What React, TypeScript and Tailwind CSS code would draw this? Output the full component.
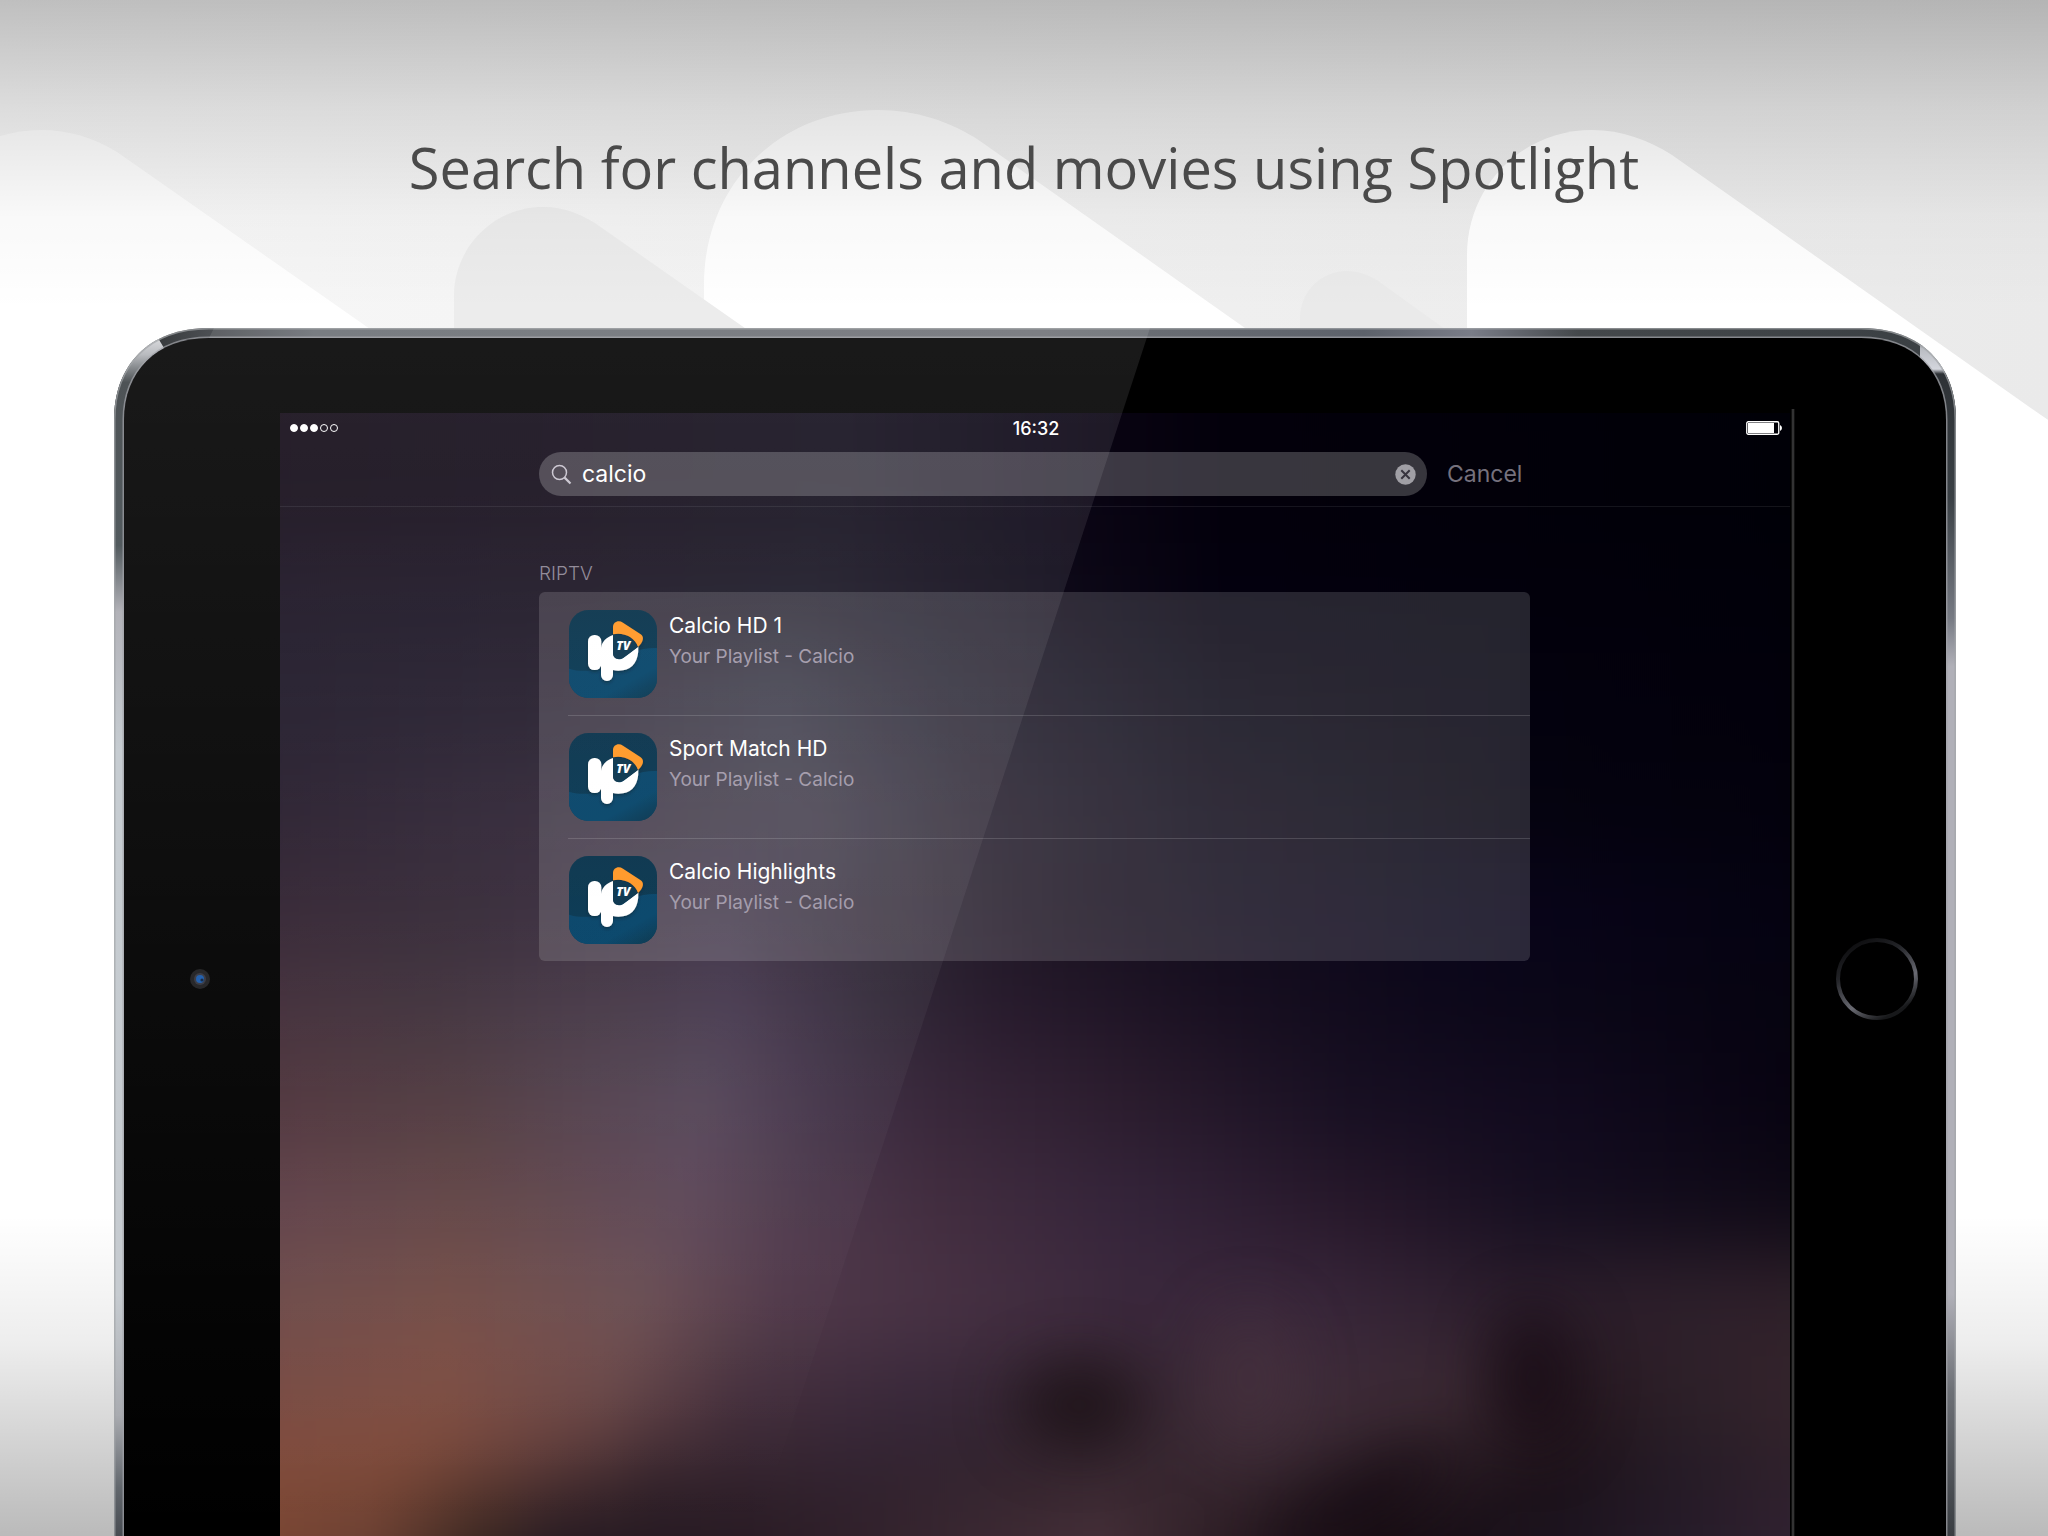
import { useState } from "react";
import { clsx } from "clsx";

type Result = {
    title: string;
    subtitle: string;
};

const RESULTS: Result[] = [
    { title: "Calcio HD 1", subtitle: "Your Playlist - Calcio" },
    { title: "Sport Match HD", subtitle: "Your Playlist - Calcio" },
    { title: "Calcio Highlights", subtitle: "Your Playlist - Calcio" },
];

// Horizontal colour bands, blurred into each other vertically
const BANDS: { id: string; y: number; height: number; stops: [number, string][] }[] = [
    { id: "b0", y: -200, height: 330, stops: [[0, "#120916"], [38, "#130f1d"], [50, "#0c0616"], [62, "#03000b"], [100, "#000007"]] },
    { id: "b1", y: 130, height: 110, stops: [[0, "#191222"], [20, "#1b1423"], [36, "#1a1725"], [50, "#0f0a19"], [62, "#03000e"], [100, "#010009"]] },
    { id: "b2", y: 240, height: 110, stops: [[0, "#1d1626"], [20, "#231b2b"], [34, "#2b2a3a"], [44, "#1c1827"], [62, "#090614"], [80, "#03010e"], [100, "#02000b"]] },
    { id: "b3", y: 350, height: 100, stops: [[0, "#241929"], [16, "#2d2233"], [36, "#353040"], [46, "#221b2a"], [60, "#110c1b"], [80, "#05030f"], [100, "#03010c"]] },
    { id: "b4", y: 450, height: 100, stops: [[0, "#30202f"], [15, "#322634"], [30, "#3c3044"], [42, "#2b2331"], [52, "#1b1321"], [62, "#120c1d"], [80, "#08041a"], [100, "#040210"]] },
    { id: "b5", y: 550, height: 90, stops: [[0, "#402a37"], [12, "#3e303a"], [24, "#463847"], [31, "#473950"], [40, "#332a39"], [48, "#281b2d"], [62, "#180f20"], [75, "#0d081a"], [100, "#05030f"]] },
    { id: "b6", y: 640, height: 100, stops: [[0, "#4d313a"], [14, "#4f3a40"], [29, "#554759"], [37, "#423248"], [44, "#38273a"], [56, "#2b1c2d"], [70, "#170f22"], [84, "#10091d"], [100, "#06020f"]] },
    { id: "b7", y: 740, height: 100, stops: [[0, "#60404a"], [14, "#624546"], [28, "#5e4759"], [36, "#4c384b"], [44, "#422d3f"], [56, "#34243a"], [70, "#261729"], [82, "#150e20"], [100, "#0d0814"]] },
    { id: "b8", y: 840, height: 100, stops: [[0, "#6e4c4b"], [13, "#754e48"], [25, "#6c5054"], [34, "#51394a"], [44, "#483244"], [56, "#3b283c"], [68, "#38263a"], [80, "#2c1e2c"], [100, "#30212a"]] },
    { id: "b9", y: 940, height: 90, stops: [[0, "#784a43"], [13, "#7f4e43"], [23, "#6c4848"], [31, "#452f3c"], [42, "#38283a"], [54, "#33242f"], [66, "#402d3a"], [76, "#3c2a33"], [84, "#261820"], [92, "#2e2129"], [100, "#37252c"]] },
    { id: "b10", y: 1030, height: 60, stops: [[0, "#854e3b"], [10, "#814b38"], [18, "#5f3b36"], [26, "#35242c"], [38, "#30222f"], [50, "#32232c"], [62, "#3a2932"], [72, "#2c1e26"], [82, "#1b1017"], [90, "#221924"], [100, "#30212c"]] },
    { id: "b11", y: 1090, height: 240, stops: [[0, "#7c4632"], [8, "#693f32"], [15, "#35241f"], [20, "#221820"], [32, "#281a23"], [44, "#382630"], [54, "#463039"], [62, "#2b1c23"], [72, "#150b11"], [84, "#1d1521"], [100, "#342434"]] },
];

function Wallpaper() {
    return (
        <svg
            className="absolute inset-0 size-full"
            viewBox="0 0 1512 1123"
            preserveAspectRatio="none"
            aria-hidden="true"
        >
            <defs>
                {BANDS.map(({ id, stops }) => (
                    <linearGradient key={id} id={id}>
                        {stops.map(([offset, color]) => (
                            <stop key={offset} offset={`${offset}%`} stopColor={color} />
                        ))}
                    </linearGradient>
                ))}
                <filter id="bandBlur" x="-10%" y="-10%" width="120%" height="120%" colorInterpolationFilters="sRGB">
                    <feGaussianBlur stdDeviation="12 42" />
                </filter>
                <filter id="blobBlur" x="-100%" y="-100%" width="300%" height="300%" colorInterpolationFilters="sRGB">
                    <feGaussianBlur stdDeviation="30" />
                </filter>
            </defs>
            <g filter="url(#bandBlur)">
                {BANDS.map(({ id, y, height }) => (
                    <rect key={id} x="-40" y={y} width="1592" height={height + 1} fill={`url(#${id})`} />
                ))}
            </g>
            <g filter="url(#blobBlur)">
                <ellipse cx="800" cy="992" rx="62" ry="40" fill="#1b1015" opacity="0.85" />
                <ellipse cx="1255" cy="965" rx="40" ry="70" fill="#160a13" opacity="0.75" />
                <ellipse cx="1080" cy="1090" rx="110" ry="30" fill="#120810" opacity="0.6" transform="rotate(-30 1080 1090)" />
                <ellipse cx="970" cy="965" rx="44" ry="70" fill="#49333f" opacity="0.5" />
            </g>
        </svg>
    );
}

function Backdrop() {
    return (
        <svg
            className="absolute inset-0 size-full"
            viewBox="0 0 2048 1536"
            preserveAspectRatio="none"
            aria-hidden="true"
        >
            <defs>
                <linearGradient id="sky" x1="0" x2="1" y1="0" y2="0">
                    <stop offset="0" stopColor="#f8f8f8" />
                    <stop offset="0.3" stopColor="#f4f4f4" />
                    <stop offset="0.6" stopColor="#efefef" />
                    <stop offset="1" stopColor="#eaeaea" />
                </linearGradient>
                <linearGradient id="topShade" x1="0" x2="0" y1="0" y2="1">
                    <stop offset="0" stopColor="#000" stopOpacity="0.23" />
                    <stop offset="0.35" stopColor="#000" stopOpacity="0.11" />
                    <stop offset="0.7" stopColor="#000" stopOpacity="0.025" />
                    <stop offset="1" stopColor="#000" stopOpacity="0" />
                </linearGradient>
                <linearGradient id="bottomShade" x1="0" x2="0" y1="0" y2="1">
                    <stop offset="0" stopColor="#000" stopOpacity="0" />
                    <stop offset="0.4" stopColor="#000" stopOpacity="0.07" />
                    <stop offset="1" stopColor="#000" stopOpacity="0.27" />
                </linearGradient>
            </defs>
            <rect width="2048" height="1536" fill="#fff" />
            <path d="M0 0H2048V420L1900 328H0Z" fill="url(#sky)" />
            <path d="M0 136C40 124 82 130 117 152L380 336V420H0Z" fill="#fff" />
            <path d="M704 340V284C704 186 778 110 878 110C915 110 950 121 980 141L1262 340Z" fill="#fff" />
            <path d="M1467 340V255C1467 186 1522 130 1592 130C1622 130 1648 140 1672 155L2048 420V500H1467Z" fill="#fff" />
            <path d="M454 340V296C454 247 494 207 543 207C566 207 584 215 602 228L762 340Z" fill="#ececec" />
            <path d="M1300 340V318C1300 292 1321 271 1347 271C1358 271 1369 275 1378 281L1460 340Z" fill="#eaeaea" />
            <rect width="2048" height="310" fill="url(#topShade)" />
            <rect y="1215" width="2048" height="321" fill="url(#bottomShade)" />
        </svg>
    );
}

function DeviceShell() {
    return (
        <svg
            className="absolute inset-0 size-full"
            viewBox="0 0 1842 1208"
            preserveAspectRatio="none"
            aria-hidden="true"
        >
            <defs>
                <linearGradient id="rimTop" gradientUnits="userSpaceOnUse" x1="40" x2="1820" y1="0" y2="0">
                    <stop offset="0" stopColor="#36393b" />
                    <stop offset="0.03" stopColor="#4b4e52" />
                    <stop offset="0.09" stopColor="#6b6f75" />
                    <stop offset="0.5" stopColor="#6f7277" />
                    <stop offset="0.68" stopColor="#5d626b" />
                    <stop offset="0.74" stopColor="#7a7d88" />
                    <stop offset="0.8" stopColor="#44484b" />
                    <stop offset="1" stopColor="#3b4044" />
                </linearGradient>
                <linearGradient id="rimLeft" gradientUnits="userSpaceOnUse" x1="0" x2="0" y1="0" y2="1208">
                    <stop offset="0.01" stopColor="#d6d7da" />
                    <stop offset="0.022" stopColor="#b9bbbf" />
                    <stop offset="0.045" stopColor="#4e5356" />
                    <stop offset="0.18" stopColor="#525a5e" />
                    <stop offset="0.235" stopColor="#b2b2b8" />
                    <stop offset="0.35" stopColor="#c6ccd1" />
                    <stop offset="0.8" stopColor="#c6cbd0" />
                    <stop offset="0.9" stopColor="#a9abb0" />
                    <stop offset="0.96" stopColor="#62676d" />
                    <stop offset="1" stopColor="#484c52" />
                </linearGradient>
                <linearGradient id="rimRight" gradientUnits="userSpaceOnUse" x1="0" x2="0" y1="0" y2="1208">
                    <stop offset="0.008" stopColor="#54585c" />
                    <stop offset="0.017" stopColor="#b9bcc2" />
                    <stop offset="0.034" stopColor="#d4d6dd" />
                    <stop offset="0.038" stopColor="#2e3236" />
                    <stop offset="0.14" stopColor="#3a4045" />
                    <stop offset="0.24" stopColor="#767a83" />
                    <stop offset="0.28" stopColor="#b0b0b8" />
                    <stop offset="0.8" stopColor="#b0b0b8" />
                    <stop offset="0.88" stopColor="#6d7076" />
                    <stop offset="1" stopColor="#393d42" />
                </linearGradient>
                <clipPath id="shell">
                    <path d="M0 1208V92C0 38 34 0 95 0H1747C1808 0 1842 38 1842 92V1208Z" />
                </clipPath>
            </defs>
            <g clipPath="url(#shell)">
                <rect width="1842" height="1208" fill="url(#rimTop)" />
                <path d="M0 0H38L50 20V1208H0Z" fill="url(#rimLeft)" />
                <path d="M1842 0H1806V1208H1842Z" fill="url(#rimRight)" />
                <path
                    d="M0 1208V92C0 38 34 0 95 0H1747C1808 0 1842 38 1842 92V1208"
                    fill="none"
                    stroke="#a4a6aa"
                    strokeOpacity="0.7"
                    strokeWidth="3"
                />
            </g>
            <path
                d="M10 1208V92C10 44 42 10 95 10H1747C1800 10 1832 44 1832 92V1208Z"
                fill="#000"
                stroke="#a3a4aa"
                strokeOpacity="0.7"
                strokeWidth="3"
            />
            <path d="M10 1208V92C10 44 42 10 95 10H1747C1800 10 1832 44 1832 92V1208Z" fill="#000" />
        </svg>
    );
}

function Glare() {
    return (
        <svg
            className="pointer-events-none absolute inset-0 size-full"
            viewBox="0 0 1842 1208"
            preserveAspectRatio="none"
            aria-hidden="true"
        >
            <defs>
                <linearGradient id="glare" x1="0" x2="0" y1="0" y2="1">
                    <stop offset="0" stopColor="#fff" stopOpacity="0.1" />
                    <stop offset="1" stopColor="#fff" stopOpacity="0" />
                </linearGradient>
            </defs>
            <path d="M10 1208V92C10 44 42 10 95 10L100 0H1036L641 1208Z" fill="url(#glare)" />
        </svg>
    );
}

function AppIcon({ id }: { id: string }) {
    return (
        <svg className="size-22 shrink-0" viewBox="0 0 264 264" aria-hidden="true">
            <defs>
                <linearGradient id={`${id}-bg`} x1="0" x2="0" y1="0" y2="1">
                    <stop offset="0" stopColor="#042f48" />
                    <stop offset="1" stopColor="#013450" />
                </linearGradient>
                <linearGradient id={`${id}-wave`} x1="0.2" x2="1" y1="0.2" y2="1">
                    <stop offset="0" stopColor="#024066" />
                    <stop offset="0.6" stopColor="#014167" />
                    <stop offset="1" stopColor="#033048" />
                </linearGradient>
                <clipPath id={`${id}-clip`}>
                    <rect width="264" height="264" rx="58" />
                </clipPath>
                <filter id={`${id}-shadow`} x="-20%" y="-20%" width="140%" height="150%">
                    <feDropShadow dx="0" dy="6" stdDeviation="5" floodColor="#04202f" floodOpacity="0.6" />
                </filter>
            </defs>
            <g clipPath={`url(#${id}-clip)`}>
                <rect width="264" height="264" fill={`url(#${id}-bg)`} />
                <path d="M0 176C40 188 90 184 130 160C175 130 215 112 264 114V264H0Z" fill={`url(#${id}-wave)`} />
            </g>
            <g filter={`url(#${id}-shadow)`}>
                <rect x="57" y="75" width="40" height="105" rx="19" fill="#fff" />
                <path
                    d="M132 75C111 82 99 96 96 113V195A18 18 0 0 0 132 195V180C141 183 152 183 162 181C191 176 210 152 208 110L164 143C152 151 134 150 132 130Z"
                    fill="#fff"
                />
                <path d="M90 118H112V160Q104 170 90 166Z" fill="#fff" />
                <path
                    d="M132 73V52C132 36 148 29 162 38L214 72C226 80 225 94 207 111C198 82 164 66 132 73Z"
                    fill="#ff9621"
                />
            </g>
            <path d="M132 75C164 69 194 82 206 111L166 141C152 151 132 148 132 130Z" fill="#04304a" />
            <text
                x="163"
                y="120"
                textAnchor="middle"
                fill="#fff"
                fontSize="36"
                fontWeight="800"
                fontStyle="italic"
                fontFamily="'Open Sans', sans-serif"
            >
                TV
            </text>
        </svg>
    );
}

function StatusBar() {
    return (
        <div className="flex h-[30px] items-center justify-between pr-2 pl-[10px]">
            <div className="flex flex-1 gap-[2px]">
                {[true, true, true, false, false].map((filled, i) => (
                    <span
                        key={i}
                        className={clsx("size-2 rounded-full border border-white", filled && "bg-white")}
                    />
                ))}
            </div>
            <span className="text-[18px] font-medium">16:32</span>
            <div className="flex flex-1 justify-end">
                <svg className="h-[14px] w-9" viewBox="0 0 36 14" aria-hidden="true">
                    <rect x="0.75" y="0.75" width="32" height="12.5" rx="1.5" fill="none" stroke="#fff" strokeWidth="1.3" />
                    <rect x="2" y="2" width="26" height="10" fill="#fff" />
                    <path d="M34 4Q36 5 36 7T34 10Z" fill="#fff" />
                </svg>
            </div>
        </div>
    );
}

function SearchBar() {
    const [query, setQuery] = useState("calcio");

    return (
        <div className="mt-[9px] grid grid-cols-[259px_1fr_260px] border-b border-white/8 pb-[10px]">
            <div className="col-start-2 flex items-center">
                <div className="flex h-11 flex-1 items-center rounded-full bg-white/21 pr-[11px] pl-3">
                    <svg className="size-[21px] shrink-0" viewBox="0 0 21 21" fill="none" stroke="#c9c4cf" aria-hidden="true">
                        <circle cx="8.5" cy="8.5" r="7" strokeWidth="1.5" />
                        <path d="M13.6 13.6L19.5 19.5" strokeWidth="2.2" />
                    </svg>
                    <input
                        type="text"
                        aria-label="Search"
                        value={query}
                        onChange={(e) => setQuery(e.target.value)}
                        className="ml-[10px] min-w-0 flex-1 bg-transparent text-[23px] leading-8 outline-none"
                    />
                    <button type="button" aria-label="Clear search" onClick={() => setQuery("")}>
                        <svg className="size-[21px]" viewBox="0 0 21 21" aria-hidden="true">
                            <circle cx="10.5" cy="10.5" r="10.2" fill="#a09fa5" />
                            <path d="M6.3 6.3L14.7 14.7M14.7 6.3L6.3 14.7" stroke="#37343e" strokeWidth="2" />
                        </svg>
                    </button>
                </div>
                <button type="button" className="ml-5 w-[83px] text-left text-[23px] text-[#75717d]">
                    Cancel
                </button>
            </div>
        </div>
    );
}

function ResultRow({ result, index }: { result: Result; index: number }) {
    return (
        <li className="pl-[29px]">
            <a
                href="#"
                className={clsx("flex h-[123px] gap-3 pl-px", index > 0 ? "border-t border-white/15 pt-[17px]" : "pt-[18px]")}
            >
                <AppIcon id={`icon-${index}`} />
                <div>
                    <h3 className="text-[21px] leading-8">{result.title}</h3>
                    <p className="text-[19px] leading-[30px] text-[#a098a8]">{result.subtitle}</p>
                </div>
            </a>
        </li>
    );
}

function Screen() {
    return (
        <div className="relative mt-[85px] flex-1 overflow-hidden text-white">
            <Wallpaper />
            <div className="relative">
                <StatusBar />
                <SearchBar />
                <section className="mr-[260px] ml-[259px] pt-[53px]">
                    <h2 className="text-[19px] leading-7 font-light text-[#8a8392]">RIPTV</h2>
                    <ul className="mt-1 overflow-hidden rounded-md bg-white/14">
                        {RESULTS.map((result, i) => (
                            <ResultRow key={result.title} result={result} index={i} />
                        ))}
                    </ul>
                </section>
            </div>
        </div>
    );
}

export default function App() {
    return (
        <main className="relative flex min-h-screen flex-col overflow-hidden bg-white font-['Inter',sans-serif]">
            <Backdrop />
            <h1 className="relative flex h-[328px] items-center justify-center pt-[6px] text-center font-['Open_Sans',sans-serif] text-[56px] text-[#4a4a4a]">
                Search for channels and movies using Spotlight
            </h1>
            <div className="relative mr-[92px] ml-[114px] flex flex-1">
                <DeviceShell />
                <div className="relative flex w-[166px] shrink-0 justify-center pt-[640px] pl-[6px]">
                    <svg className="size-[22px]" viewBox="0 0 22 22" aria-hidden="true">
                        <circle cx="11" cy="11" r="10" fill="#1e1e20" />
                        <circle cx="11" cy="11" r="6" fill="#34353f" />
                        <circle cx="11" cy="11" r="4" fill="#1a5aaa" />
                        <circle cx="13" cy="12" r="1.6" fill="#0d2340" />
                    </svg>
                </div>
                <Screen />
                <div className="relative mt-[81px] ml-[1px] w-1 shrink-0 border-x border-[#111] bg-[#333]" />
                <div className="relative flex w-[161px] shrink-0 justify-center pt-[610px] pl-[2px]">
                    <button type="button" aria-label="Home" className="size-[82px] rounded-full">
                        <svg viewBox="0 0 82 82" aria-hidden="true">
                            <defs>
                                <linearGradient id="ring" x1="0.1" x2="0.6" y1="0.1" y2="1">
                                    <stop offset="0" stopColor="#0e0e10" />
                                    <stop offset="0.3" stopColor="#222327" />
                                    <stop offset="0.7" stopColor="#696a72" />
                                    <stop offset="1" stopColor="#17181a" />
                                </linearGradient>
                            </defs>
                            <circle cx="41" cy="41" r="39" fill="#000" stroke="url(#ring)" strokeWidth="4" />
                        </svg>
                    </button>
                </div>
                <Glare />
            </div>
        </main>
    );
}
